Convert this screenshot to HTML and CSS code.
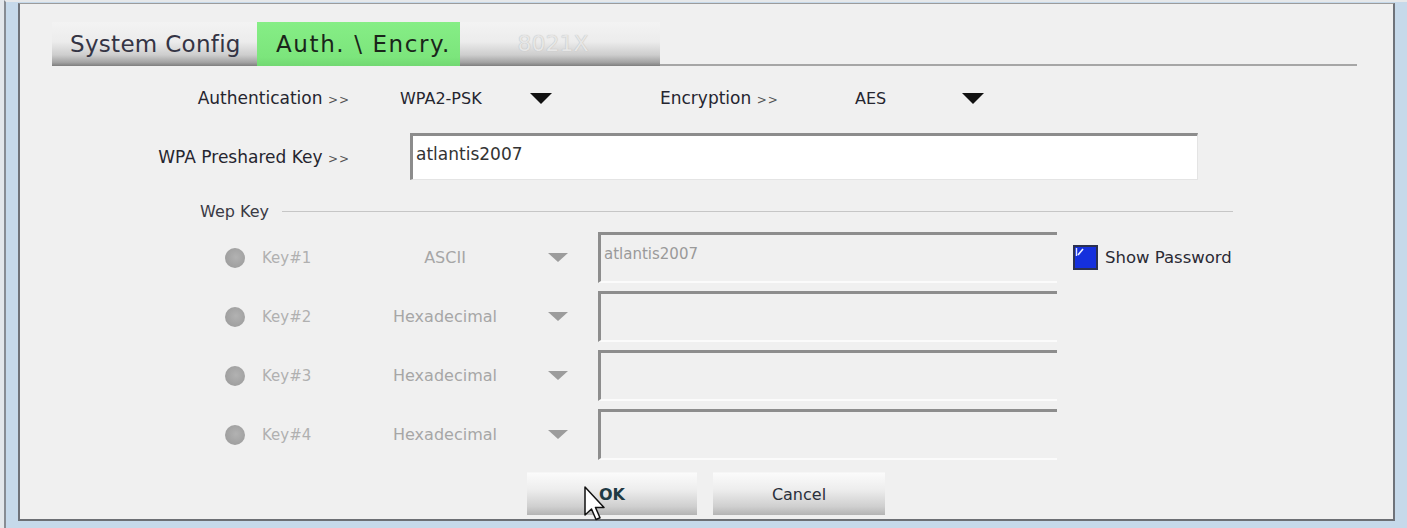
FILE: index.html
```html
<!DOCTYPE html>
<html lang="en">
<head>
<meta charset="utf-8">
<title>Auth. \ Encry.</title>
<link rel="stylesheet" href="styles.css">
</head>
<body>
<div class="window">
  <div class="dialog">
    <div class="content">
      <div class="tabbar">
        <div class="tab tab-sys">System Config</div>
        <div class="tab tab-auth">Auth. \ Encry.</div>
        <div class="tab tab-8021x">8021X</div>
        <div class="tab-rest"></div>
      </div>

      <div class="row row-auth">
        <div class="lab">Authentication <span class="gg">&gt;&gt;</span></div>
        <div class="val">WPA2-PSK</div>
        <svg class="tri" width="22" height="11" viewBox="0 0 22 11"><polygon points="0,0 22,0 11,11" fill="#111"/></svg>
        <div class="lab2">Encryption <span class="gg">&gt;&gt;</span></div>
        <div class="val2">AES</div>
        <svg class="tri" width="22" height="11" viewBox="0 0 22 11"><polygon points="0,0 22,0 11,11" fill="#111"/></svg>
      </div>

      <div class="row row-psk">
        <div class="lab">WPA Preshared Key <span class="gg">&gt;&gt;</span></div>
        <div class="psk">atlantis2007</div>
      </div>

      <div class="legend">
        <span class="legend-text">Wep Key</span>
        <span class="legend-line"></span>
      </div>

      <div class="keys">
        <div class="key-row">
          <span class="radio"></span>
          <span class="key-lab">Key#1</span>
          <span class="key-type">ASCII</span>
          <svg class="gtri" width="20" height="9" viewBox="0 0 20 9"><polygon points="0,0 20,0 10,9" fill="#9c9c9c"/></svg>
          <div class="key-input">atlantis2007</div>
          <svg class="chk" width="25" height="25" viewBox="0 0 25 25"><rect x="1" y="1" width="23" height="23" fill="#1530dd" stroke="#2b3150" stroke-width="2"/><line x1="3.5" y1="3" x2="3.5" y2="11" stroke="#dfe6ff" stroke-width="1.4"/><line x1="5" y1="10" x2="10" y2="4" stroke="#eef2ff" stroke-width="1.6"/></svg>
          <span class="chk-lab">Show Password</span>
        </div>
        <div class="key-row">
          <span class="radio"></span>
          <span class="key-lab">Key#2</span>
          <span class="key-type">Hexadecimal</span>
          <svg class="gtri" width="20" height="9" viewBox="0 0 20 9"><polygon points="0,0 20,0 10,9" fill="#9c9c9c"/></svg>
          <div class="key-input"></div>
        </div>
        <div class="key-row">
          <span class="radio"></span>
          <span class="key-lab">Key#3</span>
          <span class="key-type">Hexadecimal</span>
          <svg class="gtri" width="20" height="9" viewBox="0 0 20 9"><polygon points="0,0 20,0 10,9" fill="#9c9c9c"/></svg>
          <div class="key-input"></div>
        </div>
        <div class="key-row">
          <span class="radio"></span>
          <span class="key-lab">Key#4</span>
          <span class="key-type">Hexadecimal</span>
          <svg class="gtri" width="20" height="9" viewBox="0 0 20 9"><polygon points="0,0 20,0 10,9" fill="#9c9c9c"/></svg>
          <div class="key-input"></div>
        </div>
      </div>

      <div class="actions">
        <button class="btn btn-ok">OK</button>
        <button class="btn btn-cancel">Cancel</button>
      </div>
    </div>
  </div>
</div>
<svg class="cursor" width="22" height="36" viewBox="0 0 22 36"><path d="M1,1 L1,29 L7.5,23 L12,33.5 L16,31.8 L11.5,21.5 L20,21.5 Z" fill="#fff" stroke="#111" stroke-width="1.5" stroke-linejoin="round"/></svg>
</body>
</html>
```

FILE: styles.css
```css
html, body {
  margin: 0;
  padding: 0;
}
body {
  width: 1407px;
  height: 528px;
  overflow: hidden;
  background: #e3e7eb;
  position: relative;
  font-family: "DejaVu Sans", "Liberation Sans", sans-serif;
  color: #25252f;
}
.window {
  margin-left: 4px;
  height: 528px;
  box-sizing: border-box;
  border-left: 2px solid #878c93;
  border-top: 2px solid #e6e8ea;
  padding: 1px 12px 7px 12px;
  background: #c6d9ea;
  display: flex;
}
.dialog {
  flex: 1;
  background: #f0f0f0;
  border-left: 2px solid #6f737a;
  border-right: 2px solid #6f737a;
  border-top: 1px solid #9c9c9c;
  border-bottom: 2px solid #6c6f74;
}
.content {
  padding: 18px 0 0 32px;
}
.tabbar {
  display: flex;
  width: 1305px;
  height: 44px;
}
.tab {
  box-sizing: border-box;
  height: 44px;
  font-size: 23px;
  line-height: 44px;
  white-space: nowrap;
}
.tab-sys {
  width: 205px;
  padding-left: 18px;
  color: #343444;
  letter-spacing: 0.3px;
  background: linear-gradient(#f3f3f3 0%, #ececec 45%, #cdcdcd 75%, #a2a2a2 92%, #7e7e7e 100%);
}
.tab-auth {
  width: 203px;
  padding-left: 19px;
  color: #1a251a;
  letter-spacing: 1.6px;
  background: linear-gradient(#86ee86 0%, #7ce57c 80%, #72d872 100%);
}
.tab-8021x {
  width: 200px;
  text-align: center;
  padding-right: 14px;
  color: #e6e6e6;
  font-size: 22px;
  text-shadow: 0 0 1px #b0b0b0;
  background: linear-gradient(#f3f3f3 0%, #ececec 45%, #cdcdcd 75%, #a2a2a2 92%, #7e7e7e 100%);
}
.tab-rest {
  flex: 1;
  height: 44px;
  box-sizing: border-box;
  border-bottom: 2px solid #a6a6a6;
}
.row {
  display: flex;
  align-items: center;
  font-size: 17px;
  white-space: nowrap;
}
.gg {
  font-size: 12px;
  letter-spacing: 1px;
  color: #555;
}
.row-auth {
  margin-top: 18px;
  height: 28px;
}
.lab {
  width: 298px;
  text-align: right;
}
.val {
  margin-left: 50px;
  width: 130px;
  font-size: 16px;
}
.tri {
  display: block;
  flex: none;
}
.lab2 {
  margin-left: 108px;
  width: 195px;
}
.val2 {
  width: 107px;
  font-size: 16px;
}
.row-psk {
  margin-top: 21px;
}
.psk {
  margin-left: 60px;
  width: 788px;
  height: 47px;
  box-sizing: border-box;
  background: #fff;
  border-top: 3px solid #8c8c8c;
  border-left: 3px solid #8c8c8c;
  border-right: 1px solid #e4e4e4;
  border-bottom: 1px solid #e4e4e4;
  padding: 8px 0 0 3px;
  color: #333;
}
.legend {
  margin-top: 22px;
  width: 1181px;
  height: 18px;
  box-sizing: border-box;
  padding-left: 148px;
  display: flex;
  align-items: center;
}
.legend-text {
  font-size: 16px;
  color: #3a3a44;
}
.legend-line {
  flex: 1;
  margin-left: 13px;
  height: 1px;
  background: #c6c6c6;
}
.keys {
  margin-top: 12px;
  display: flex;
  flex-direction: column;
  gap: 8px;
}
.key-row {
  display: flex;
  align-items: center;
  height: 51px;
  font-size: 16px;
  color: #a6a6a6;
  white-space: nowrap;
}
.radio {
  margin-left: 173px;
  width: 20px;
  height: 20px;
  border-radius: 50%;
  background: radial-gradient(circle at 55% 45%, #b2b2b2 0%, #a2a2a2 60%, #979797 100%);
  flex: none;
}
.key-lab {
  margin-left: 17px;
  width: 88px;
  font-size: 15px;
  color: #b0b0b0;
}
.key-type {
  width: 190px;
  text-align: center;
}
.gtri {
  display: block;
  margin-left: 8px;
  flex: none;
}
.key-input {
  margin-left: 30px;
  width: 459px;
  height: 51px;
  box-sizing: border-box;
  background: #f0f0f0;
  border-top: 3px solid #8d8d8d;
  border-left: 3px solid #8d8d8d;
  border-bottom: 2px solid #fbfbfb;
  padding: 10px 0 0 3px;
  font-size: 15px;
  color: #9a9a9a;
  flex: none;
}
.chk {
  display: block;
  margin-left: 16px;
  flex: none;
}
.chk-lab {
  margin-left: 7px;
  color: #2a2a34;
  font-size: 16.5px;
}
.actions {
  margin-top: 12px;
  display: flex;
}
.btn {
  height: 43px;
  border: none;
  border-top: 1px solid #f6f6f6;
  background: linear-gradient(#fbfbfb 0%, #ededed 40%, #cfcfcf 80%, #b4b4b4 100%);
  font-family: "DejaVu Sans", "Liberation Sans", sans-serif;
  font-size: 16px;
  color: #2a2f3a;
  padding: 0;
}
.btn-ok {
  margin-left: 475px;
  width: 170px;
  font-weight: bold;
  color: #1f3a44;
}
.btn-cancel {
  margin-left: 16px;
  width: 172px;
}
.cursor {
  position: absolute;
  left: 584px;
  top: 486px;
}
```
